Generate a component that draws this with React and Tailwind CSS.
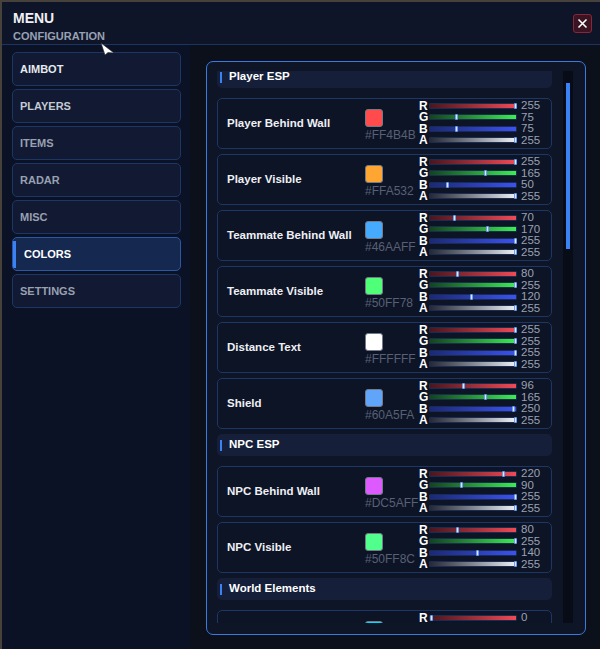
import React, { useEffect, useRef } from 'react';

const tabs = [
  { name: 'AIMBOT', tone: 'text-[#e6e9ef]' },
  { name: 'PLAYERS', tone: 'text-[#c4c9d3]' },
  { name: 'ITEMS', tone: 'text-[#98a0b1]' },
  { name: 'RADAR', tone: 'text-[#98a0b1]' },
  { name: 'MISC', tone: 'text-[#98a0b1]' },
  { name: 'COLORS', active: true },
  { name: 'SETTINGS', tone: 'text-[#98a0b1]' },
];

const sections = [
  {
    title: 'Player ESP',
    items: [
      { label: 'Player Behind Wall', hex: '#FF4B4B', rgba: [255, 75, 75, 255] },
      { label: 'Player Visible', hex: '#FFA532', rgba: [255, 165, 50, 255] },
      { label: 'Teammate Behind Wall', hex: '#46AAFF', rgba: [70, 170, 255, 255] },
      { label: 'Teammate Visible', hex: '#50FF78', rgba: [80, 255, 120, 255] },
      { label: 'Distance Text', hex: '#FFFFFF', rgba: [255, 255, 255, 255] },
      { label: 'Shield', hex: '#60A5FA', rgba: [96, 165, 250, 255] },
    ],
  },
  {
    title: 'NPC ESP',
    items: [
      { label: 'NPC Behind Wall', hex: '#DC5AFF', rgba: [220, 90, 255, 255] },
      { label: 'NPC Visible', hex: '#50FF8C', rgba: [80, 255, 140, 255] },
    ],
  },
  {
    title: 'World Elements',
    items: [{ label: 'Loot Highlight', hex: '#00DCFF', rgba: [0, 220, 255, 255] }],
  },
];

const channels = [
  { key: 'R', bar: 'bg-gradient-to-r from-[#4a1620] to-[#f04a55]' },
  { key: 'G', bar: 'bg-gradient-to-r from-[#12451c] to-[#3cee4e]' },
  { key: 'B', bar: 'bg-gradient-to-r from-[#1c2878] to-[#3a52f2]' },
  { key: 'A', bar: 'bg-gradient-to-r from-[#262a36] to-[#eef1f7]' },
];

function Slider({ letter, bar, value }) {
  return (
    <div className="flex h-[11.5px] items-center">
      <span className="w-[10px] text-[12px] font-bold leading-none text-white">{letter}</span>
      <div className={`relative h-[6px] w-[88px] rounded-[1px] border border-[#1b2c52] ${bar}`}>
        <div
          className="absolute top-[-1px] h-[6px] w-[3px] rounded-[1px] border border-[#6d9cec] bg-[#dce8ff]"
          style={{ left: `${(value / 255) * 84}px` }}
        />
      </div>
      <span className="ml-[4px] text-[11.5px] leading-none text-[#9aa1b0]">{value}</span>
    </div>
  );
}

function ColorRow({ label, hex, rgba }) {
  return (
    <div className="flex h-[51px] shrink-0 rounded-[5px] border border-[#1c3766] bg-[#0d1426]">
      <div className="flex w-[147px] items-center pl-[9px] text-[11.5px] font-bold text-[#eef0f4]">{label}</div>
      <div className="flex w-[54px] flex-col justify-center pt-[3px]">
        <div
          className="h-[18px] w-[18px] rounded-[3px] border border-[#737a88]"
          style={{ backgroundColor: hex }}
        />
        <span className="mt-[2px] text-[12px] leading-[12px] text-[#586075]">{hex}</span>
      </div>
      <div className="flex flex-col pt-[1px]">
        {channels.map((c, i) => (
          <Slider key={c.key} letter={c.key} bar={c.bar} value={rgba[i]} />
        ))}
      </div>
    </div>
  );
}

function SectionHeader({ title }) {
  return (
    <div className="mb-[5px] flex h-[22px] shrink-0 items-center rounded-[5px] bg-[#151f3a] pl-[3px]">
      <div className="h-[11px] w-[2px] bg-[#3b82f6]" />
      <span className="ml-[7px] text-[11.5px] font-bold text-white">{title}</span>
    </div>
  );
}

export default function App() {
  const listRef = useRef(null);

  useEffect(() => {
    if (listRef.current) listRef.current.scrollTop = 5;
  }, []);

  return (
    <div className="h-[649px] w-[600px] overflow-hidden bg-[#46413b] pl-[2px] pt-[2px] font-['Liberation_Sans',Arial,sans-serif]">
      <div className="relative flex h-full flex-col bg-[#0c1124]">
        {/* title bar */}
        <div className="flex h-[43px] shrink-0 items-start justify-between border-b border-[#1c3461] bg-[#0f1528] pl-[11px] pr-[8px]">
          <div className="pt-[9px]">
            <div className="text-[14px] font-bold leading-[15px] text-[#eef0f4]">MENU</div>
            <div className="mt-[4px] text-[11px] font-bold leading-[12px] text-[#98a1b4]">CONFIGURATION</div>
          </div>
          <button className="mt-[12px] flex h-[19px] w-[19px] items-center justify-center rounded-[3px] border border-[#8a2638] bg-[#3a1422] text-white">
            <svg width="11" height="11" viewBox="0 0 11 11" fill="none" stroke="white" strokeWidth="1.6">
              <path d="M1.5 1.5 L9.5 9.5 M9.5 1.5 L1.5 9.5" />
            </svg>
          </button>
        </div>

        {/* mouse pointer */}
        <svg className="absolute left-[98px] top-[40px]" width="16" height="14" viewBox="0 0 16 14">
          <path d="M1 1 L14 11 L8 10.5 L5 13 Z" fill="white" stroke="#222" strokeWidth="0.6" />
        </svg>

        <div className="flex min-h-0 flex-1">
          {/* tabs */}
          <div className="flex w-[188px] shrink-0 flex-col gap-[3px] bg-[#0c1226] pl-[10px] pr-[9px] pt-[7px]">
            {tabs.map((t) =>
              t.active ? (
                <div
                  key={t.name}
                  className="relative flex h-[34px] items-center overflow-hidden rounded-[5px] border border-[#2b57a3] bg-[#15284f] pl-[11px] text-[11px] font-bold text-white"
                >
                  <div className="absolute left-0 top-[3px] h-[27px] w-[3px] bg-[#3b82f6]" />
                  {t.name}
                </div>
              ) : (
                <div
                  key={t.name}
                  className={`flex h-[34px] items-center rounded-[5px] border border-[#1c3766] bg-[#111a32] pl-[7px] text-[11px] font-bold ${t.tone}`}
                >
                  {t.name}
                </div>
              )
            )}
          </div>

          {/* colour settings */}
          <div className="flex-1 bg-[#0c101b] pl-[16px] pr-[14px] pt-[16px]">
            <div className="flex h-[574px] rounded-[7px] border border-[#3a7be2] bg-[#0e1527] pb-[11px] pl-[10px] pr-[11px] pt-[9px]">
              <div ref={listRef} className="flex w-[335px] flex-col gap-[5px] overflow-hidden">
                {sections.map((s) => (
                  <React.Fragment key={s.title}>
                    <SectionHeader title={s.title} />
                    {s.items.map((it) => (
                      <ColorRow key={it.label} {...it} />
                    ))}
                  </React.Fragment>
                ))}
              </div>
              <div className="ml-[11px] h-full w-[10px] bg-[#080c16] pl-[3px] pt-[12px]">
                <div className="h-[166px] w-[4px] bg-[#3b82f6]" />
              </div>
            </div>
          </div>
        </div>
      </div>
    </div>
  );
}
